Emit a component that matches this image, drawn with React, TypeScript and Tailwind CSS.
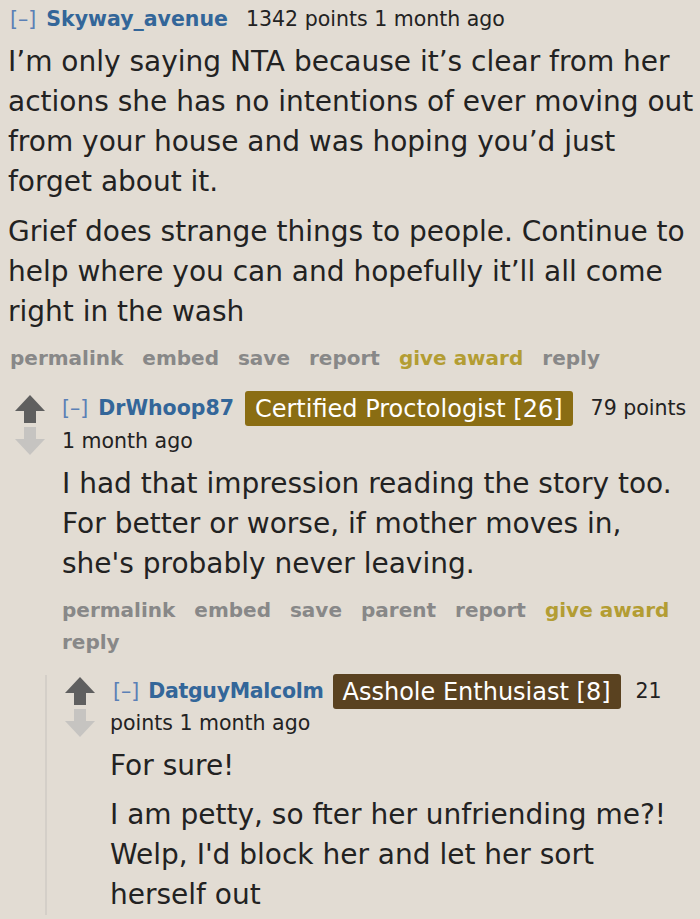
import React from 'react';

const font = { fontFamily: '"DejaVu Sans", Verdana, sans-serif' };

const UpArrow = () => (
  <svg width="30" height="28" viewBox="0 0 30 28">
    <polygon points="15,0 30,16 21,16 21,28 9,28 9,16 0,16" fill="#5f5f5f" />
  </svg>
);

const DownArrow = () => (
  <svg width="30" height="28" viewBox="0 0 30 28">
    <polygon points="9,0 21,0 21,12 30,12 15,28 0,12 9,12" fill="#c6c4c1" />
  </svg>
);

const Actions = ({ items }: { items: string[] }) => (
  <div className="flex flex-wrap gap-x-[19px] text-[20px] font-bold leading-[32px] text-[#888]">
    {items.map((it) => (
      <span key={it} className={it === 'give award' ? 'text-[#b39d33]' : ''}>
        {it}
      </span>
    ))}
  </div>
);

const Flair = ({ text, color }: { text: string; color: string }) => (
  <span className={`inline-flex h-[35px] items-center whitespace-nowrap rounded-[3px] px-[10px] text-[24px] font-normal text-white ${color}`}>
    {text}
  </span>
);

// lines are broken the same way as the thread view
const Lines = ({ lines }: { lines: string[] }) => (
  <p className="whitespace-nowrap">
    {lines.map((l, i) => (
      <React.Fragment key={i}>
        {l}
        {i < lines.length - 1 && <br />}
      </React.Fragment>
    ))}
  </p>
);

export default function App() {
  return (
    <div className="min-h-screen w-[700px] overflow-hidden bg-[#e2dcd3] text-[#222]" style={font}>
      {/* top comment */}
      <div className="pl-2">
        <div className="flex h-[38px] items-center text-[20.5px]">
          <span className="ml-[2px] text-[#5b80b6]">[–]</span>
          <span className="ml-[10px] font-bold text-[#336699]">Skyway_avenue</span>
          <span className="ml-[18px]">1342 points 1 month ago</span>
        </div>
        <div className="mt-1 text-[28px] leading-[40px]">
          <Lines
            lines={[
              'I’m only saying NTA because it’s clear from her',
              'actions she has no intentions of ever moving out',
              'from your house and was hoping you’d just',
              'forget about it.',
            ]}
          />
          <div className="mt-[10px]">
            <Lines
              lines={[
                'Grief does strange things to people. Continue to',
                'help where you can and hopefully it’ll all come',
                'right in the wash',
              ]}
            />
          </div>
        </div>
        <div className="mt-[10px] pl-[2px]">
          <Actions items={['permalink', 'embed', 'save', 'report', 'give award', 'reply']} />
        </div>
      </div>

      {/* child comment */}
      <div className="mt-[17px] flex pl-[15px]">
        <div className="flex w-[30px] flex-col items-center gap-[4px] pt-[4px]">
          <UpArrow />
          <DownArrow />
        </div>
        <div className="ml-[17px] flex-1">
          <div className="flex h-[35px] items-center whitespace-nowrap text-[20.5px]">
            <span className="text-[#5b80b6]">[–]</span>
            <span className="ml-[10px] font-bold text-[#336699]">DrWhoop87</span>
            <span className="ml-[11px]">
              <Flair text="Certified Proctologist [26]" color="bg-[#8a6d13]" />
            </span>
            <span className="ml-[18px]">79 points</span>
          </div>
          <div className="text-[20.5px] leading-[30px]">1 month ago</div>
          <div className="mt-[8px] text-[28px] leading-[40px]">
            <Lines
              lines={[
                'I had that impression reading the story too.',
                'For better or worse, if mother moves in,',
                "she's probably never leaving.",
              ]}
            />
          </div>
          <div className="mt-[10px] w-[630px]">
            <Actions items={['permalink', 'embed', 'save', 'parent', 'report', 'give award', 'reply']} />
          </div>

          {/* grandchild comment */}
          <div className="-ml-[17px] mt-[17px] flex border-l-2 border-[#d4cfc8] pl-[18px]">
            <div className="flex w-[30px] flex-col items-center gap-[4px] pt-[2px]">
              <UpArrow />
              <DownArrow />
            </div>
            <div className="ml-[15px] flex-1">
              <div className="flex h-[33px] items-center whitespace-nowrap text-[20.5px]">
                <span className="ml-[3px] text-[#5b80b6]">[–]</span>
                <span className="ml-[9px] font-bold tracking-[-0.3px] text-[#336699]">DatguyMalcolm</span>
                <span className="ml-[9px]">
                  <Flair text="Asshole Enthusiast [8]" color="bg-[#5a4220]" />
                </span>
                <span className="ml-[15px]">21</span>
              </div>
              <div className="text-[20.5px] leading-[30px]">points 1 month ago</div>
              <div className="mt-[8px] text-[28px] leading-[40px]">
                <Lines lines={['For sure!']} />
                <div className="mt-[9px]">
                  <Lines
                    lines={['I am petty, so fter her unfriending me?!', "Welp, I'd block her and let her sort", 'herself out']}
                  />
                </div>
              </div>
            </div>
          </div>
        </div>
      </div>
    </div>
  );
}
